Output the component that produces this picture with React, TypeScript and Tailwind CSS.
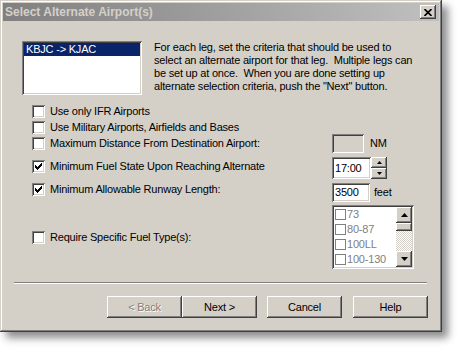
import React, { FC } from 'react';

const sunken =
  'shadow-[inset_1px_1px_0_#808080,inset_-1px_-1px_0_#ffffff,inset_2px_2px_0_#404040,inset_-2px_-2px_0_#d4d0c8]';
const raised =
  'shadow-[inset_-1px_-1px_0_#404040,inset_1px_1px_0_#ffffff,inset_-2px_-2px_0_#808080,inset_2px_2px_0_#d4d0c8]';

const CheckMark: FC = () => (
  <svg width="7" height="7" viewBox="0 0 7 7" shapeRendering="crispEdges">
    <rect x="0" y="2" width="1" height="3" fill="#000" />
    <rect x="1" y="3" width="1" height="3" fill="#000" />
    <rect x="2" y="4" width="1" height="3" fill="#000" />
    <rect x="3" y="3" width="1" height="3" fill="#000" />
    <rect x="4" y="2" width="1" height="3" fill="#000" />
    <rect x="5" y="1" width="1" height="3" fill="#000" />
    <rect x="6" y="0" width="1" height="3" fill="#000" />
  </svg>
);

const Check: FC<{ checked?: boolean }> = ({ checked }) => (
  <span className={`flex h-[13px] w-[13px] shrink-0 items-center justify-center bg-white ${sunken}`}>
    {checked && <CheckMark />}
  </span>
);

const Arrow: FC<{ up?: boolean; w?: number }> = ({ up, w = 5 }) => {
  const h = Math.ceil(w / 2);
  const pts = up ? `0,${h} ${w},${h} ${w / 2},0` : `0,0 ${w},0 ${w / 2},${h}`;
  return (
    <svg width={w} height={h} viewBox={`0 0 ${w} ${h}`}>
      <polygon points={pts} fill="#000" />
    </svg>
  );
};

const Button: FC<{ label: string; disabled?: boolean }> = ({ label, disabled }) => (
  <div
    className={`flex h-[22px] w-[75px] items-center justify-center bg-[#d4d0c8] ${raised} ${
      disabled ? 'text-[#808080] [text-shadow:1px_1px_0_#ffffff]' : 'text-black'
    }`}
  >
    {label}
  </div>
);

const Row: FC<{ label: string; checked?: boolean; h: number; children?: React.ReactNode; labelH?: number }> = ({
  label,
  checked,
  h,
  children,
  labelH,
}) => (
  <div className="flex" style={{ height: h }}>
    <div className="flex w-[300px] items-center gap-[5px]" style={labelH ? { height: labelH } : undefined}>
      <Check checked={checked} />
      <span className="whitespace-nowrap">{label}</span>
    </div>
    {children}
  </div>
);

const fuels = ['73', '80-87', '100LL', '100-130'];

const App: FC = () => {
  return (
    <div
      className="h-[348px] w-[457px] overflow-hidden bg-white text-[11px] leading-[13px] tracking-[-0.2px] text-black"
      style={{ fontFamily: '"Liberation Sans", Arial, sans-serif' }}
    >
      <div
        className="flex h-[332px] w-[442px] flex-col bg-[#d4d0c8] p-[3px] shadow-[inset_-1px_-1px_0_#404040,inset_1px_1px_0_#d4d0c8,inset_-2px_-2px_0_#808080,inset_2px_2px_0_#ffffff,6px_6px_8px_rgba(0,0,0,0.45)]"
      >
        {/* title bar */}
        <div className="flex h-[18px] items-center justify-between bg-gradient-to-r from-[#808080] to-[#c0c0c0] pl-[2px] pr-[3px]">
          <span className="text-[12px] font-bold tracking-normal text-[#d4d0c8]">Select Alternate Airport(s)</span>
          <div className={`flex h-[14px] w-[16px] items-center justify-center bg-[#d4d0c8] ${raised}`}>
            <svg width="8" height="7" viewBox="0 0 8 7">
              <path d="M0.5 0 L7.5 7 M7.5 0 L0.5 7" stroke="#000" strokeWidth="1.6" />
            </svg>
          </div>
        </div>

        {/* top: leg list + help text */}
        <div className="ml-[19px] mt-[20px] flex gap-[12px]">
          <div className={`h-[54px] w-[120px] bg-white p-[2px] ${sunken}`}>
            <div className="h-[13px] bg-[#0a246a] pl-[2px] text-white">KBJC -&gt; KJAC</div>
          </div>
          <div className="whitespace-pre">
            <div>For each leg, set the criteria that should be used to</div>
            <div>select an alternate airport for that leg.  Multiple legs can</div>
            <div>be set up at once.  When you are done setting up</div>
            <div>alternate selection criteria, push the "Next" button.</div>
          </div>
        </div>

        {/* criteria */}
        <div className="ml-[29px] mt-[8px] flex flex-col">
          <Row label="Use only IFR Airports" h={16} />
          <Row label="Use Military Airports, Airfields and Bases" h={16} />
          <Row label="Maximum Distance From Destination Airport:" h={16}>
            <div className="flex items-center gap-[6px]">
              <div className={`h-[19px] w-[32px] bg-[#d4d0c8] ${sunken}`} />
              <span>NM</span>
            </div>
          </Row>
          <div className="mt-[6px]">
            <Row label="Minimum Fuel State Upon Reaching Alternate" checked h={22} labelH={18}>
              <div className="flex">
                <div className={`flex h-[22px] w-[39px] items-center bg-white pl-[3px] ${sunken}`}>17:00</div>
                <div className="flex flex-col">
                  <div className={`flex h-[11px] w-[16px] items-center justify-center bg-[#d4d0c8] ${raised}`}>
                    <Arrow up />
                  </div>
                  <div className={`flex h-[11px] w-[16px] items-center justify-center bg-[#d4d0c8] ${raised}`}>
                    <Arrow />
                  </div>
                </div>
              </div>
            </Row>
          </div>
          <div className="mt-[4px]">
            <Row label="Minimum Allowable Runway Length:" checked h={19} labelH={13}>
              <div className="flex items-center gap-[4px]">
                <div className={`flex h-[19px] w-[38px] items-center bg-white pl-[3px] ${sunken}`}>3500</div>
                <span>feet</span>
              </div>
            </Row>
          </div>
          <div className="mt-[3px]">
            <Row label="Require Specific Fuel Type(s):" h={64}>
              <div className={`flex h-[64px] w-[82px] bg-white p-[2px] ${sunken}`}>
                <div className="flex flex-1 flex-col overflow-hidden text-[#808080]">
                  {fuels.map((f) => (
                    <div key={f} className="flex h-[15px] shrink-0 items-center gap-[1px] pl-[1px]">
                      <span className="h-[11px] w-[11px] shrink-0 border border-[#808080] bg-white" />
                      <span>{f}</span>
                    </div>
                  ))}
                </div>
                <div className="flex w-[16px] flex-col">
                  <div className={`flex h-[16px] items-center justify-center bg-[#d4d0c8] ${raised}`}>
                    <Arrow up w={7} />
                  </div>
                  <div className={`h-[8px] bg-[#d4d0c8] ${raised}`} />
                  <div className="flex-1 bg-[repeating-conic-gradient(#d4d0c8_0%_25%,#ffffff_0%_50%)] bg-[length:2px_2px]" />
                  <div className={`flex h-[16px] items-center justify-center bg-[#d4d0c8] ${raised}`}>
                    <Arrow w={7} />
                  </div>
                </div>
              </div>
            </Row>
          </div>
        </div>

        {/* separator */}
        <div className="ml-[11px] mt-[13px] w-[413px] border-t border-b border-t-[#808080] border-b-white" />

        {/* buttons */}
        <div className="mr-[11px] mt-[12px] flex justify-end">
          <Button label="< Back" disabled />
          <Button label="Next >" />
          <div className="ml-[10px]">
            <Button label="Cancel" />
          </div>
          <div className="ml-[11px]">
            <Button label="Help" />
          </div>
        </div>
      </div>
    </div>
  );
};

export default App;
